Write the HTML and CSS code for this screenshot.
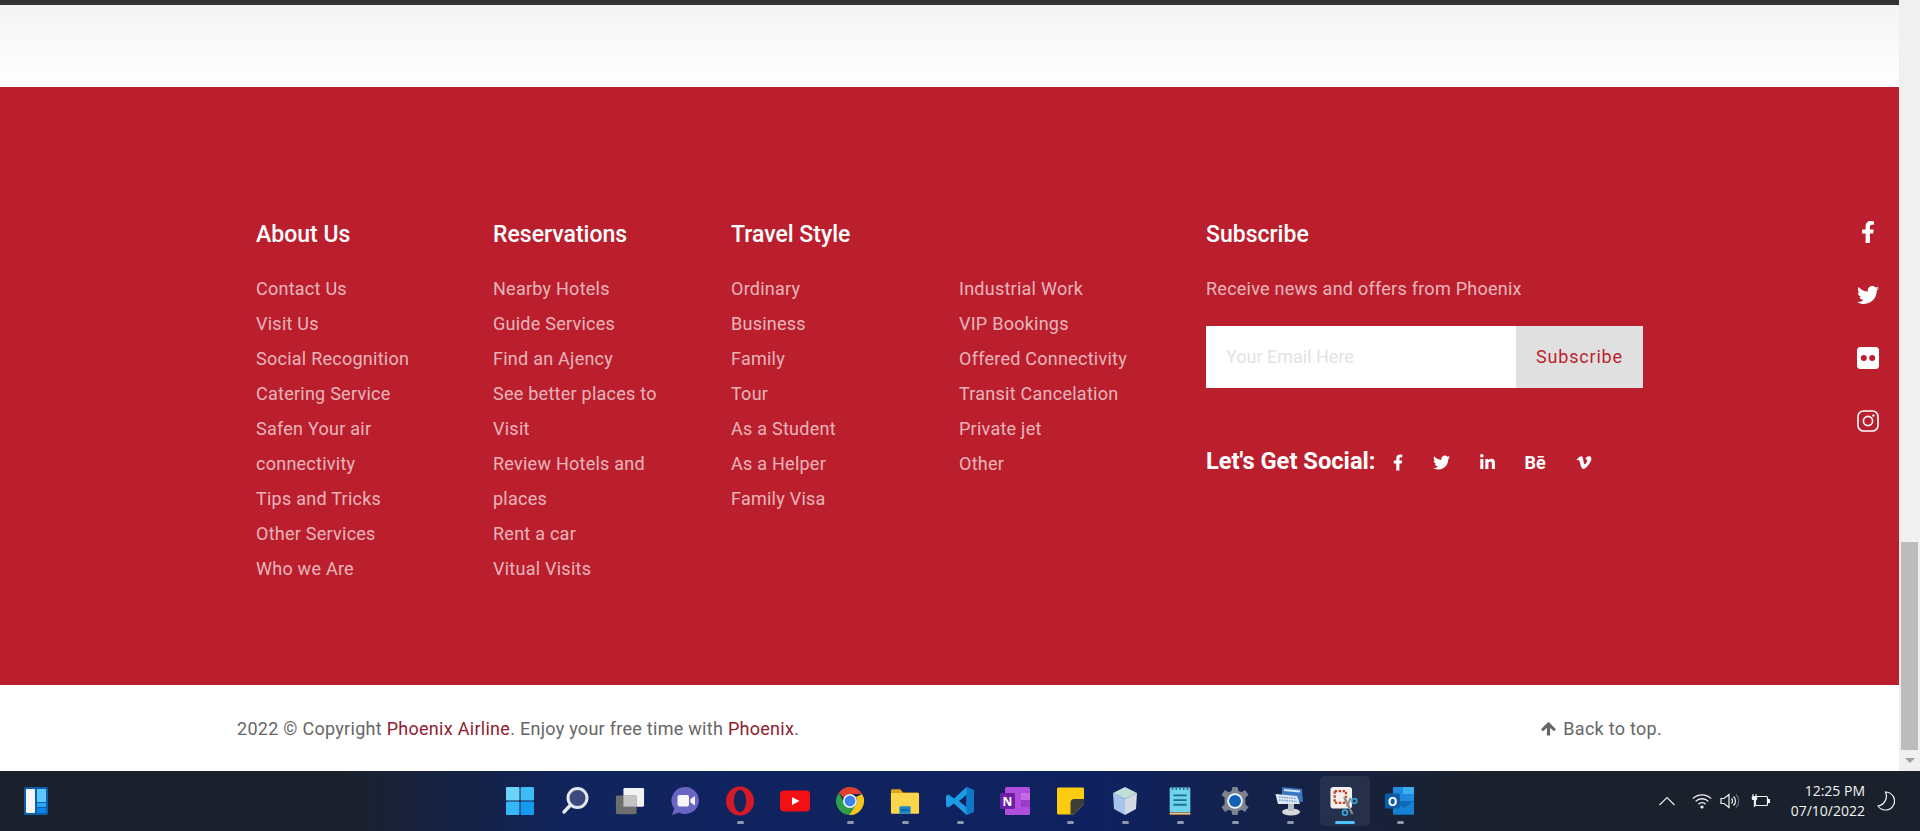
FILE: index.html
```html
<!DOCTYPE html>
<html lang="en">
  <head>
    <meta charset="UTF-8" />
    <meta name="viewport" content="width=device-width, initial-scale=1.0" />
    <title>Phoenix Airline</title>
    <link rel="stylesheet" href="styles.css">
  </head>
  <body>
    <div class="window">
      <div class="page">
        <div class="top-strip"></div>
        <div class="fade"></div>

        <footer class="footer">
          <div class="footer-col">
            <h4>About Us</h4>
            <ul>
              <li>Contact Us</li>
              <li>Visit Us</li>
              <li>Social Recognition</li>
              <li>Catering Service</li>
              <li>Safen Your air connectivity</li>
              <li>Tips and Tricks</li>
              <li>Other Services</li>
              <li>Who we Are</li>
            </ul>
          </div>
          <div class="footer-col">
            <h4>Reservations</h4>
            <ul>
              <li>Nearby Hotels</li>
              <li>Guide Services</li>
              <li>Find an Ajency</li>
              <li>See better places to Visit</li>
              <li>Review Hotels and places</li>
              <li>Rent a car</li>
              <li>Vitual Visits</li>
            </ul>
          </div>
          <div class="footer-col travel">
            <h4>Travel Style</h4>
            <div class="travel-lists">
              <ul>
                <li>Ordinary</li>
                <li>Business</li>
                <li>Family</li>
                <li>Tour</li>
                <li>As a Student</li>
                <li>As a Helper</li>
                <li>Family Visa</li>
              </ul>
              <ul>
                <li>Industrial Work</li>
                <li>VIP Bookings</li>
                <li>Offered Connectivity</li>
                <li>Transit Cancelation</li>
                <li>Private jet</li>
                <li>Other</li>
              </ul>
            </div>
          </div>
          <div class="footer-col subscribe">
            <h4>Subscribe</h4>
            <p>Receive news and offers from Phoenix</p>
            <form class="sub-form">
              <input type="text" placeholder="Your Email Here" />
              <button type="button">Subscribe</button>
            </form>
            <div class="social-row">
              <strong>Let's Get Social:</strong>
              <span class="soc"><svg class="i-f" viewBox="0 0 320 512"><path d="M279.14 288l14.22-92.66h-88.91v-60.13c0-25.35 12.42-50.06 52.24-50.06h40.42V6.26S260.43 0 225.36 0c-73.22 0-121.08 44.38-121.08 124.72v70.62H22.89V288h81.39v224h100.17V288z"/></svg></span>
              <span class="soc"><svg class="i-tw" viewBox="0 0 512 512"><path d="M459.37 151.716c.325 4.548.325 9.097.325 13.645 0 138.72-105.583 298.558-298.558 298.558-59.452 0-114.68-17.219-161.137-47.106 8.447.974 16.568 1.299 25.34 1.299 49.055 0 94.213-16.568 130.274-44.832-46.132-.975-84.792-31.188-98.112-72.772 6.498.974 12.995 1.624 19.818 1.624 9.421 0 18.843-1.3 27.614-3.573-48.081-9.747-84.143-51.98-84.143-102.985v-1.299c13.969 7.797 30.214 12.67 47.431 13.319-28.264-18.843-46.781-51.005-46.781-87.391 0-19.492 5.197-37.36 14.294-52.954 51.655 63.675 129.3 105.258 216.365 109.807-1.624-7.797-2.599-15.918-2.599-24.04 0-57.828 46.782-104.934 104.934-104.934 30.213 0 57.502 12.67 76.67 33.137 23.715-4.548 46.456-13.32 66.599-25.34-7.798 24.366-24.366 44.833-46.132 57.827 21.117-2.273 41.584-8.122 60.426-16.243-14.292 20.791-32.161 39.308-52.628 54.253z"/></svg></span>
              <span class="soc"><svg class="i-in" viewBox="0 0 448 512"><path d="M100.28 448H7.4V148.9h92.88zM53.79 108.1C24.09 108.1 0 83.5 0 53.8a53.79 53.79 0 0 1 107.58 0c0 29.7-24.1 54.3-53.79 54.3zM447.9 448h-92.68V302.4c0-34.7-.7-79.2-48.29-79.2-48.29 0-55.69 37.7-55.69 76.7V448h-92.78V148.9h89.08v40.8h1.3c12.4-23.5 42.69-48.3 87.88-48.3 94 0 111.28 61.9 111.28 142.3V448z"/></svg></span>
              <span class="soc soc-be">Bē</span>
              <span class="soc"><svg class="i-vm" viewBox="0 0 448 512"><path d="M447.8 153.6c-2 43.6-32.4 103.3-91.4 179.1-60.9 79.2-112.4 118.8-154.6 118.8-26.1 0-48.2-24.1-66.3-72.3C100.3 250 85.3 174.3 56.2 174.3c-3.4 0-15.1 7.1-35.2 21.1L0 168.2c51.6-45.3 100.9-95.7 131.8-98.5 34.9-3.4 56.3 20.5 64.4 71.5 28.7 181.5 41.4 208.9 93.6 126.7 18.7-29.6 28.8-52.1 30.2-67.6 4.8-45.9-35.8-42.8-63.3-31 22-72.1 64.1-107.1 126.2-105.1 45.8 1.2 67.5 31.1 64.9 89.4z"/></svg></span>
            </div>
          </div>
          <div class="side-social">
            <svg viewBox="0 0 320 512"><path d="M279.14 288l14.22-92.66h-88.91v-60.13c0-25.35 12.42-50.06 52.24-50.06h40.42V6.26S260.43 0 225.36 0c-73.22 0-121.08 44.38-121.08 124.72v70.62H22.89V288h81.39v224h100.17V288z"/></svg>
            <svg viewBox="0 0 512 512"><path d="M459.37 151.716c.325 4.548.325 9.097.325 13.645 0 138.72-105.583 298.558-298.558 298.558-59.452 0-114.68-17.219-161.137-47.106 8.447.974 16.568 1.299 25.34 1.299 49.055 0 94.213-16.568 130.274-44.832-46.132-.975-84.792-31.188-98.112-72.772 6.498.974 12.995 1.624 19.818 1.624 9.421 0 18.843-1.3 27.614-3.573-48.081-9.747-84.143-51.98-84.143-102.985v-1.299c13.969 7.797 30.214 12.67 47.431 13.319-28.264-18.843-46.781-51.005-46.781-87.391 0-19.492 5.197-37.36 14.294-52.954 51.655 63.675 129.3 105.258 216.365 109.807-1.624-7.797-2.599-15.918-2.599-24.04 0-57.828 46.782-104.934 104.934-104.934 30.213 0 57.502 12.67 76.67 33.137 23.715-4.548 46.456-13.32 66.599-25.34-7.798 24.366-24.366 44.833-46.132 57.827 21.117-2.273 41.584-8.122 60.426-16.243-14.292 20.791-32.161 39.308-52.628 54.253z"/></svg>
            <svg viewBox="0 0 22 22"><rect x="0" y="0" width="22" height="22" rx="3.5" fill="#fff"/><circle cx="6.8" cy="11" r="3" fill="#bb1f2e"/><circle cx="15.2" cy="11" r="3" fill="#bb1f2e"/></svg>
            <svg viewBox="0 0 22 22"><rect x="1" y="1" width="20" height="20" rx="5.5" fill="none" stroke="#fff" stroke-width="1.6"/><circle cx="11" cy="11" r="4.6" fill="none" stroke="#fff" stroke-width="1.6"/><circle cx="16.4" cy="5.6" r="1.2" fill="#fff"/></svg>
          </div>
        </footer>

        <div class="copyright">
          <p>2022 © Copyright <a>Phoenix Airline</a>. Enjoy your free time with <a>Phoenix</a>.</p>
          <p class="back-top"><svg viewBox="0 0 14 14"><path d="M7 0.8 L14 7.6 L12 9.6 L8.5 6.2 V13.6 H5.5 V6.2 L2 9.6 L0 7.6 Z"/></svg> Back to top.</p>
        </div>
      </div>

      <div class="scrollbar">
        <div class="scroll-thumb"></div>
        <div class="scroll-arrow"></div>
      </div>
    </div>

    <div class="taskbar">
      <!-- widgets -->
      <div class="widgets">
        <svg viewBox="0 0 24 28" width="28" height="28"><rect width="24" height="28" rx="1.5" fill="#0f5fa8"/><rect x="2" y="2" width="9" height="24" rx="1" fill="#f4f6f8"/><rect x="13" y="2" width="9" height="13" fill="#5cc8ff"/><rect x="13" y="16" width="9" height="4" fill="#2aa5f5"/><rect x="13" y="21" width="9" height="5" fill="#0c84e4"/></svg>
      </div>

      <div class="apps">
        <div class="app">
          <svg viewBox="0 0 30 30"><rect x="1" y="1" width="13.5" height="13.5" rx="1" fill="#6cd4fb"/><rect x="15.5" y="1" width="13.5" height="13.5" rx="1" fill="#3fbcf8"/><rect x="1" y="15.5" width="13.5" height="13.5" rx="1" fill="#38b6f7"/><rect x="15.5" y="15.5" width="13.5" height="13.5" rx="1" fill="#149bf0"/></svg>
          <i></i>
        </div>
        <div class="app">
          <svg viewBox="0 0 30 30"><circle cx="17.5" cy="12" r="9.5" fill="#3c4a80" stroke="#e3e7ee" stroke-width="3"/><path d="M10.5 19 L4 26" stroke="#e3e7ee" stroke-width="3.4" stroke-linecap="round"/></svg>
          <i></i>
        </div>
        <div class="app">
          <svg viewBox="0 0 32 30"><rect x="9" y="1" width="22" height="20" rx="1.5" fill="#f2f2f2"/><rect x="1" y="9" width="22" height="20" rx="1.5" fill="#6e6e6e"/><rect x="9" y="9" width="14" height="12" fill="#c4c4c4"/></svg>
          <i></i>
        </div>
        <div class="app">
          <svg viewBox="0 0 30 30"><path d="M15.5 1 A13.5 13.5 0 1 1 9 26.4 L2 29 L4.2 22.5 A13.5 13.5 0 0 1 15.5 1 Z" fill="#6a64c4"/><rect x="7.5" y="9" width="11.5" height="11.5" rx="2" fill="#f5f5fa"/><path d="M20.5 13 L25 10 V19.5 L20.5 16.5 Z" fill="#f5f5fa"/></svg>
          <i></i>
        </div>
        <div class="app run">
          <svg viewBox="0 0 30 30"><ellipse cx="15" cy="15" rx="14" ry="14.5" fill="#d81a26"/><ellipse cx="15" cy="15" rx="6.2" ry="11.2" fill="#14245c"/></svg>
          <i></i>
        </div>
        <div class="app">
          <svg viewBox="0 0 30 22" class="wide"><rect width="30" height="21" y="0.5" rx="4" fill="#f40f14"/><path d="M12 7 L19.5 11 L12 15 Z" fill="#fff"/></svg>
          <i></i>
        </div>
        <div class="app run">
          <svg viewBox="0 0 30 30"><path d="M15 1 A14 14 0 0 1 27.1 8 L15 8 A7 7 0 0 0 8.6 12 L3.8 6.7 A14 14 0 0 1 15 1Z" fill="#e0402f"/><path d="M27.1 8 A14 14 0 0 1 14 29 L20.6 19 A7 7 0 0 0 21 11 Z" fill="#f8c51c"/><path d="M14 29 A14 14 0 0 1 3.8 6.7 L10 18 A7 7 0 0 0 20.6 19 Z" fill="#2f9e4b"/><circle cx="15" cy="15" r="7" fill="#f5f5f5"/><circle cx="15" cy="15" r="5.4" fill="#3b82ed"/></svg>
          <i></i>
        </div>
        <div class="app run">
          <svg viewBox="0 0 32 30"><path d="M1 4 A1.5 1.5 0 0 1 2.5 2.5 H11 L14 6 H30 V12 H1 Z" fill="#e0a30e"/><rect x="1" y="6.5" width="30" height="22" rx="1" fill="#fbd64a"/><path d="M10 28.5 V22 A1.5 1.5 0 0 1 11.5 20.5 H20.5 A1.5 1.5 0 0 1 22 22 V28.5 Z" fill="#1a85cf"/><rect x="12" y="24" width="8" height="1.6" fill="#0d5a98"/></svg>
          <i></i>
        </div>
        <div class="app run">
          <svg viewBox="0 0 30 30"><path d="M21.5 1 L29 4.2 V25.8 L21.5 29 L9 17.5 L3.6 21.6 L1 20.2 V9.8 L3.6 8.4 L9 12.5 Z M21.5 8.8 L14 15 L21.5 21.2 Z" fill="#1c9ce5" fill-rule="evenodd"/><path d="M21.5 1 L29 4.2 V25.8 L21.5 29 Z" fill="#0a78c6"/></svg>
          <i></i>
        </div>
        <div class="app">
          <svg viewBox="0 0 30 30"><rect x="5" y="1" width="25" height="28" rx="1.5" fill="#b04ddc"/><rect x="21" y="7" width="9" height="7" fill="#c56be6"/><rect x="21" y="14" width="9" height="7" fill="#9a3cc8"/><rect x="0" y="7" width="15" height="16" rx="1.5" fill="#6d1fa6"/><text x="7.5" y="19.5" class="app-letter">N</text></svg>
          <i></i>
        </div>
        <div class="app run">
          <svg viewBox="0 0 28 28" class="sm"><path d="M1.5 0 H26.5 A1.5 1.5 0 0 1 28 1.5 V17 L17 28 H1.5 A1.5 1.5 0 0 1 0 26.5 V1.5 A1.5 1.5 0 0 1 1.5 0 Z" fill="#fdcb10"/><path d="M28 12 V17 L17 28 H14 V16 A4 4 0 0 1 18 12 Z" fill="#3e3e38"/></svg>
          <i></i>
        </div>
        <div class="app run">
          <svg viewBox="0 0 30 30"><path d="M15 1 L27 7 L15 13 L3 7 Z" fill="#bfe0d8"/><path d="M3 7 L15 13 V29 L4 23 Z" fill="#a8c4ec"/><path d="M27 7 L15 13 V29 L26 23 Z" fill="#d4dae2"/></svg>
          <i></i>
        </div>
        <div class="app run">
          <svg viewBox="0 0 24 32" class="tall"><rect x="1" y="1.5" width="22" height="27" rx="1.5" fill="#6fd3ec"/><path d="M1 28 H23 V31 H1 Z" fill="#a56a30"/><rect x="1" y="29" width="22" height="1" fill="#efe6d0"/><path d="M5 10 H19 M5 15 H19 M5 20 H19" stroke="#1f6f90" stroke-width="2"/><path d="M4 2 V4 M8 2 V4 M12 2 V4 M16 2 V4 M20 2 V4" stroke="#1e5f80" stroke-width="1.6"/></svg>
          <i></i>
        </div>
        <div class="app run">
          <svg viewBox="0 0 30 30"><path d="M12.4 1 H17.6 L18.4 5 L21.6 6.3 L25 4 L28.6 9 L25.4 11.6 V18.4 L28.6 21 L25 26 L21.6 23.7 L18.4 25 L17.6 29 H12.4 L11.6 25 L8.4 23.7 L5 26 L1.4 21 L4.6 18.4 V11.6 L1.4 9 L5 4 L8.4 6.3 L11.6 5 Z" fill="#7c8490"/><circle cx="15" cy="15" r="7.8" fill="#f4f6fa"/><circle cx="15" cy="15" r="6" fill="#0f62b8"/></svg>
          <i></i>
        </div>
        <div class="app run">
          <svg viewBox="0 0 30 30"><path d="M7 1 L27 3 L28 16 L7 14 Z" fill="#3a78c4"/><path d="M9 3 L25 4.6 V6.5 L9 5 Z" fill="#d8e6f4"/><path d="M0.5 8 L22 10 L25 18 L3 18 Z" fill="#dfe8f5"/><path d="M4 11 L21 12.5 M4 14 L22 15.5" stroke="#6f9bd0" stroke-width="1.4" stroke-dasharray="1.5 1"/><ellipse cx="16" cy="26" rx="9" ry="3.4" fill="#d6d8dc"/><rect x="13" y="18" width="6" height="7" fill="#b9bdc4"/></svg>
          <i></i>
        </div>
        <div class="app active">
          <svg viewBox="0 0 32 32"><rect x="0.5" y="1" width="23" height="23" rx="3" fill="#f2f0ee"/><path d="M5 5.5 H17 V18 H5 Z" fill="none" stroke="#c9421f" stroke-width="2.4" stroke-dasharray="2.6 1.6"/><path d="M15 12 L20 22 L24 30" stroke="#8d8d8d" stroke-width="2.2" fill="none"/><path d="M22 13 L18 22" stroke="#8d8d8d" stroke-width="2.2"/><circle cx="26" cy="16" r="2.6" fill="none" stroke="#35a2dc" stroke-width="1.8"/><circle cx="16" cy="28.4" r="2.6" fill="none" stroke="#35a2dc" stroke-width="1.8"/></svg>
          <i></i>
        </div>
        <div class="app run">
          <svg viewBox="0 0 30 30"><rect x="8" y="1" width="21" height="14" fill="#1f8ae0"/><rect x="18" y="1" width="11" height="7" fill="#36b0f0"/><path d="M8 15 H29 V27 A1.5 1.5 0 0 1 27.5 28.5 H9.5 A1.5 1.5 0 0 1 8 27 Z" fill="#0f6ab8"/><path d="M8 15 L19 22 L29 15 V28.5 H8 Z" fill="#1682d4"/><rect x="0" y="7.5" width="15" height="15" rx="1.5" fill="#0a5ba8"/><text x="7.5" y="19.5" class="app-letter">O</text></svg>
          <i></i>
        </div>
      </div>

      <div class="tray">
        <svg class="tray-chev" viewBox="0 0 16 10"><path d="M0.5 9 L8 1.5 L15.5 9" fill="none" stroke="#e8e8e8" stroke-width="1.2"/></svg>
        <svg class="tray-wifi" viewBox="0 0 20 16"><path d="M0.8 5.6 A13 13 0 0 1 19.2 5.6 M3.6 8.4 A9 9 0 0 1 16.4 8.4 M6.4 11.2 A5 5 0 0 1 13.6 11.2" fill="none" stroke="#f2f2f2" stroke-width="1.3"/><circle cx="10" cy="14" r="1.6" fill="#f2f2f2"/></svg>
        <svg class="tray-vol" viewBox="0 0 20 16"><path d="M1 5.5 H4 L9 1.5 V14.5 L4 10.5 H1 Z" fill="none" stroke="#f2f2f2" stroke-width="1.2"/><path d="M11.5 5.5 A3.5 3.5 0 0 1 11.5 10.5 M13.5 3.5 A6 6 0 0 1 13.5 12.5" fill="none" stroke="#f2f2f2" stroke-width="1.2"/><path d="M16 1.5 A9 9 0 0 1 16 14.5" fill="none" stroke="#6d7078" stroke-width="1.1"/></svg>
        <svg class="tray-bat" viewBox="0 0 20 16"><rect x="4.5" y="3.5" width="12" height="9" rx="1" fill="none" stroke="#f2f2f2" stroke-width="1.2"/><rect x="17" y="6" width="2" height="4" fill="#f2f2f2"/><path d="M2 1 V3 M5 1 V3" stroke="#f2f2f2" stroke-width="1.1"/><rect x="0.8" y="3" width="5.4" height="4" rx="1" fill="#f2f2f2"/><path d="M3.5 7 V14" stroke="#f2f2f2" stroke-width="1.3"/></svg>
        <div class="clock">
          <span>12:25 PM</span>
          <span>07/10/2022</span>
        </div>
        <svg class="tray-moon" viewBox="0 0 18 20"><path d="M8.5 1 A9 9 0 1 1 1 15 A10 10 0 0 0 8.5 1 Z" fill="none" stroke="#f2f2f2" stroke-width="1.2"/></svg>
      </div>
    </div>
  </body>
</html>
```

FILE: styles.css
```css
* {
  box-sizing: border-box;
}

html,
body {
  margin: 0;
  padding: 0;
  height: 831px;
  overflow: hidden;
}

body {
  font-family: Roboto, "Liberation Sans", sans-serif;
  display: flex;
  flex-direction: column;
}

.window {
  display: flex;
  height: 771px;
}

.page {
  width: 1899px;
  display: flex;
  flex-direction: column;
  background: #fff;
}

.top-strip {
  height: 5px;
  background: #333;
}

.fade {
  height: 82px;
  background: linear-gradient(to bottom, #f4f4f4, #fff);
}

/* red footer */
.footer {
  height: 598px;
  background: #bb1f2e;
  padding: 133px 0 0 256px;
  display: flex;
  color: #fff;
}

.footer-col {
  width: 237px;
  padding-right: 40px;
}

.footer-col:nth-child(2) {
  width: 238px;
}

.footer-col h4 {
  margin: 0 0 20.5px;
  font-size: 23px;
  font-weight: 500;
  line-height: 30px;
  color: #fff;
}

.footer-col ul {
  list-style: none;
  margin: 0;
  padding: 0;
}

.footer-col li,
.subscribe p {
  font-size: 18px;
  line-height: 35px;
  color: rgba(255, 255, 255, 0.68);
  letter-spacing: 0.25px;
}

.travel {
  width: 475px;
  padding-right: 0;
}

.travel-lists {
  display: flex;
}

.travel-lists ul {
  width: 228px;
}

.subscribe {
  width: 437px;
  padding-right: 0;
}

.subscribe p {
  margin: 0;
}

.sub-form {
  display: flex;
  height: 62px;
  margin-top: 20px;
}

.sub-form input {
  width: 310px;
  border: none;
  padding: 0 20px;
  font-family: inherit;
  font-size: 18px;
  background: #fff;
  outline: none;
}

.sub-form input::placeholder {
  color: #e3e3e3;
}

.sub-form button {
  width: 127px;
  border: none;
  background: #e0e0e0;
  color: #bb1f2e;
  font-family: inherit;
  font-size: 18px;
  letter-spacing: 0.8px;
}

.social-row {
  display: flex;
  align-items: center;
  gap: 30px;
  height: 30px;
  margin-top: 58px;
}

.social-row strong {
  font-size: 23.7px;
  font-weight: 700;
  white-space: nowrap;
  margin-right: -13px;
}

.soc {
  display: flex;
  align-items: center;
  margin-top: 3px;
  font-size: 18px;
  font-weight: 700;
}

.soc svg {
  height: 17px;
  fill: #fff;
}

.soc .i-f {
  width: 10px;
}

.soc .i-tw {
  width: 17px;
}

.soc .i-in {
  width: 15px;
}

.soc .i-vm {
  width: 16px;
}

.side-social {
  margin-left: 214px;
  margin-top: 1px;
  width: 22px;
  display: flex;
  flex-direction: column;
  gap: 41px;
}

.side-social svg {
  width: 22px;
  height: 22px;
  fill: #fff;
}

/* copyright row */
.copyright {
  height: 86px;
  padding: 1px 237px 0 237px;
  display: flex;
  justify-content: space-between;
  align-items: center;
  color: #666;
  font-size: 18px;
  letter-spacing: 0.28px;
}

.copyright p {
  margin: 0;
}

.copyright a {
  color: #8e1c30;
}

.back-top svg {
  width: 15px;
  height: 15px;
  margin-right: 3px;
  fill: #666;
  vertical-align: -1px;
}

/* browser scrollbar */
.scrollbar {
  width: 21px;
  background: #f0f0f0;
  display: flex;
  flex-direction: column;
  justify-content: flex-end;
  align-items: center;
}

.scroll-thumb {
  width: 17px;
  height: 208px;
  background: #bcbcbc;
}

.scroll-arrow {
  height: 21px;
  width: 0;
  border-left: 5px solid transparent;
  border-right: 5px solid transparent;
  border-top: 5px solid #a0a0a0;
  border-bottom: 16px solid transparent;
  transform: translateY(8px);
}

/* windows taskbar */
.taskbar {
  height: 60px;
  background: linear-gradient(to right, #1b212c 0, #1b212c 340px, #10245e 580px, #0f2260 1100px, #1b212c 1480px, #1b212c 100%);
  display: flex;
  align-items: flex-start;
}

.widgets {
  width: 492.5px;
  padding: 16px 0 0 22px;
}

.widgets svg {
  display: block;
}

.apps {
  display: flex;
}

.app {
  width: 55px;
  height: 60px;
  padding-top: 15px;
  display: flex;
  flex-direction: column;
  align-items: center;
  position: relative;
}

.app svg {
  width: 30px;
  height: 30px;
  display: block;
}

.app svg.sm {
  width: 27px;
}

.app svg.tall {
  width: 24px;
}

.app-letter {
  font-family: "Open Sans", sans-serif;
  font-size: 12px;
  font-weight: 700;
  fill: #fff;
  text-anchor: middle;
}

.app i {
  display: none;
  width: 7px;
  height: 3px;
  border-radius: 2px;
  background: #8f98ad;
  margin-top: 5px;
}

.app.run i {
  display: block;
}

.app.active::before {
  content: "";
  position: absolute;
  left: 2.5px;
  top: 5px;
  width: 50px;
  height: 50px;
  border-radius: 5px;
  background: rgba(255, 255, 255, 0.07);
}

.app.active svg {
  position: relative;
}

.app.active i {
  display: block;
  position: relative;
  width: 20px;
  background: #4cc2ff;
}

.tray {
  margin-left: auto;
  height: 60px;
  display: flex;
  align-items: center;
  color: #f2f2f2;
  padding-right: 25px;
}

.tray svg {
  display: block;
}

.tray-chev {
  width: 16px;
  height: 10px;
}

.tray-wifi {
  width: 20px;
  height: 16px;
  margin-left: 17px;
}

.tray-vol {
  width: 20px;
  height: 16px;
  margin-left: 8px;
}

.tray-bat {
  width: 20px;
  height: 16px;
  margin-left: 11px;
}

.clock {
  width: 94px;
  display: flex;
  flex-direction: column;
  align-items: flex-end;
  font-family: "Open Sans", sans-serif;
  font-size: 14px;
  line-height: 20px;
}

.tray-moon {
  width: 18px;
  height: 20px;
  margin-left: 12px;
}
```
